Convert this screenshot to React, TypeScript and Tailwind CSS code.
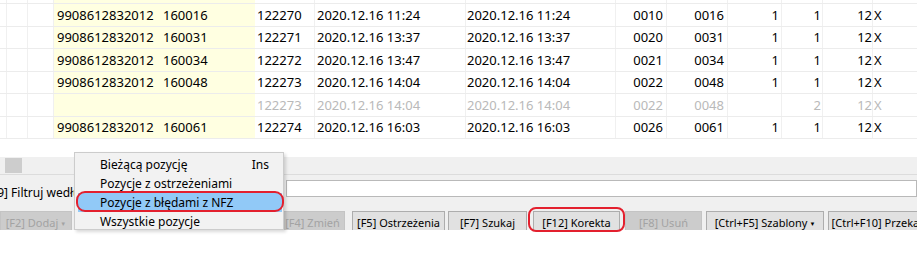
type Row = {
  ean: string;
  kod: string;
  nr: string;
  d1: string;
  d2: string;
  p1: string;
  p2: string;
  q1: string;
  q2: string;
  vat: string;
  x: string;
  grey?: boolean;
};

const rows: Row[] = [
  { ean: "9908612832012", kod: "160016", nr: "122270", d1: "2020.12.16 11:24", d2: "2020.12.16 11:24", p1: "0010", p2: "0016", q1: "1", q2: "1", vat: "12", x: "X" },
  { ean: "9908612832012", kod: "160031", nr: "122271", d1: "2020.12.16 13:37", d2: "2020.12.16 13:37", p1: "0020", p2: "0031", q1: "1", q2: "1", vat: "12", x: "X" },
  { ean: "9908612832012", kod: "160034", nr: "122272", d1: "2020.12.16 13:47", d2: "2020.12.16 13:47", p1: "0021", p2: "0034", q1: "1", q2: "1", vat: "12", x: "X" },
  { ean: "9908612832012", kod: "160048", nr: "122273", d1: "2020.12.16 14:04", d2: "2020.12.16 14:04", p1: "0022", p2: "0048", q1: "1", q2: "1", vat: "12", x: "X" },
  { ean: "", kod: "", nr: "122273", d1: "2020.12.16 14:04", d2: "2020.12.16 14:04", p1: "0022", p2: "0048", q1: "", q2: "2", vat: "12", x: "X", grey: true },
  { ean: "9908612832012", kod: "160061", nr: "122274", d1: "2020.12.16 16:03", d2: "2020.12.16 16:03", p1: "0026", p2: "0061", q1: "1", q2: "1", vat: "12", x: "X" },
];

const rowHeights = ["h-[23px]", "h-[22px]", "h-[23px]", "h-[22px]", "h-[23px]", "h-[22px]"];

function GridRow({ r, h }: { r?: Row; h: string }) {
  const cell = "h-full border-r border-[#f0f0f0] flex items-center shrink-0";
  return (
    <div className={`flex ${h} border-t border-[#ececec] ${r?.grey ? "text-[#b9b9b9]" : "text-black"}`}>
      <div className={`${cell} w-[7px]`} />
      <div className={`${cell} w-[21px]`} />
      <div className={`${cell} w-[26px]`} />
      <div className="h-full w-[201px] bg-[#ffffe1] flex items-center shrink-0">
        <span className="w-[109px] pl-[3px]">{r?.ean}</span>
        <span>{r?.kod}</span>
      </div>
      <div className={`${cell} w-[60px] pl-[2px]`}>{r?.nr}</div>
      <div className={`${cell} w-[151px] pl-[2px]`}>{r?.d1}</div>
      <div className={`${cell} w-[150px] pl-[1px]`}>{r?.d2}</div>
      <div className={`${cell} w-[51px] justify-end pr-[3px]`}>{r?.p1}</div>
      <div className={`${cell} w-[61px] justify-end pr-[3px]`}>{r?.p2}</div>
      <div className={`${cell} w-[54px] justify-end pr-[2px]`}>{r?.q1}</div>
      <div className={`${cell} w-[41px] justify-end pr-[1px]`}>{r?.q2}</div>
      <div className={`${cell} w-[50px] justify-end pr-0`}>{r?.vat}</div>
      <div className="h-full w-[44px] flex items-center pl-[1px] shrink-0">{r?.x}</div>
    </div>
  );
}

function Btn({ label, w, off, arrow }: { label: string; w: string; off?: boolean; arrow?: boolean }) {
  return (
    <div
      className={`${w} h-[24px] shrink-0 flex justify-center pt-[3px] border whitespace-nowrap overflow-hidden ${
        off ? "bg-[#cccccc] border-[#c4c4c4] text-[#a3a3a3]" : "bg-[#e1e1e1] border-[#adadad] text-black"
      }`}
    >
      {label}
      {arrow && <span className="text-[6px] ml-[2px] mt-[5px]">▼</span>}
    </div>
  );
}

export default function App() {
  return (
    <div className="w-[917px] h-[253px] bg-white relative overflow-hidden font-['Noto_Sans','Liberation_Sans',sans-serif]">
      <div className="text-[13px] leading-none">
        <GridRow h="h-[3px] !border-t-0" />
        {rows.map((r, i) => (
          <GridRow key={i} r={r} h={rowHeights[i]} />
        ))}
        <div className="h-px bg-[#ececec]" />
      </div>

      <div className="h-[18px] mt-[18px] bg-[#f0f0f0] border-b border-[#dcdcdc] flex items-center">
        <div className="ml-[5px] w-[17px] h-[15px] bg-[#cdcdcd]" />
      </div>

      <div className="h-[33px] bg-[#f0f0f0] flex items-start text-[12px]">
        <span className="-ml-[13px] mt-[9px] w-[299px] whitespace-nowrap">[F9] Filtruj według</span>
        <div className="mt-[5px] flex-1 h-[17px] bg-white border border-[#b9b9b9]" />
      </div>

      <div className="h-[22px] bg-[#f0f0f0] flex items-start text-[11px] overflow-hidden pt-[3px]">
        <Btn label="[F2] Dodaj" w="w-[72px]" off arrow />
        <div className="w-[208px] shrink-0" />
        <Btn label="[F4] Zmień" w="w-[65px]" off />
        <Btn label="[F5] Ostrzeżenia" w="w-[93px] ml-[7px]" />
        <Btn label="[F7] Szukaj" w="w-[79px] ml-[3px]" />
        <Btn label="[F12] Korekta" w="w-[87px] ml-[6px]" />
        <Btn label="[F8] Usuń" w="w-[77px] ml-[5px]" off />
        <Btn label="[Ctrl+F5] Szablony" w="w-[118px] ml-[4px]" arrow />
        <Btn label="[Ctrl+F10] Przekaż" w="w-[100px] ml-[4px]" />
      </div>

      {/* popup menu */}
      <div className="absolute left-[74px] top-[152px] w-[210px] h-[78px] bg-[#f2f2f2] border border-[#cccccc] shadow-[2px_2px_3px_rgba(0,0,0,0.15)] pt-[2px] text-[12px] text-black leading-none">
        <div className="h-[19px] flex items-center justify-between pl-[25px] pr-[14px]">
          <span>Bieżącą pozycję</span>
          <span>Ins</span>
        </div>
        <div className="h-[19px] flex items-center pl-[25px]">Pozycje z ostrzeżeniami</div>
        <div className="h-[19px] flex items-center pl-[22px] ml-[3px] mr-px bg-[#91c9f7]">Pozycje z błędami z NFZ</div>
        <div className="h-[19px] flex items-center pl-[25px]">Wszystkie pozycje</div>
      </div>

      {/* annotations */}
      <div className="absolute left-[76px] top-[191px] w-[208px] h-[21px] border-2 border-[#e3202e] rounded-[9px]" />
      <div className="absolute left-[528px] top-[207px] w-[97px] h-[25px] border-2 border-[#e3202e] rounded-[8px]" />
    </div>
  );
}
